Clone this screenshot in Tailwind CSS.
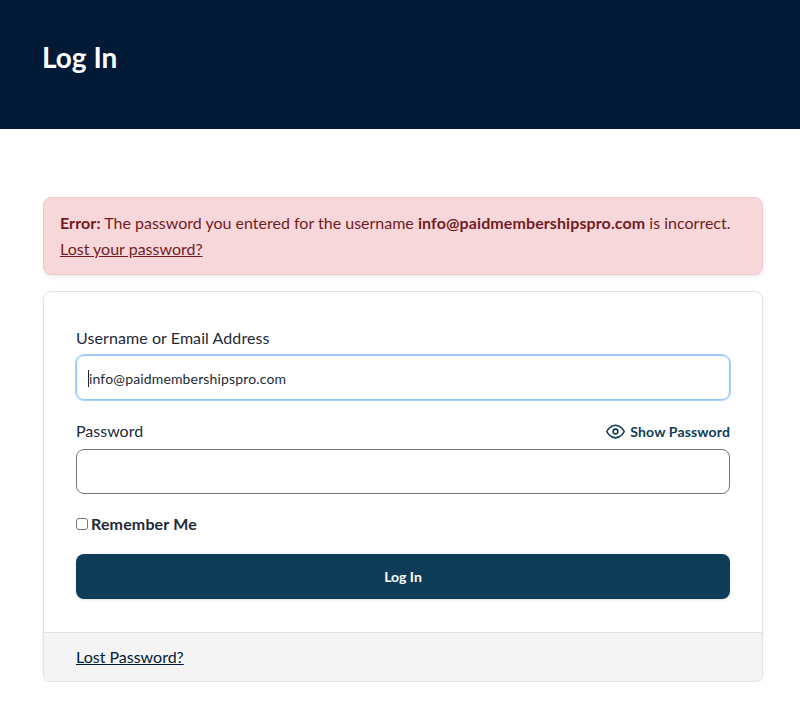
<!DOCTYPE html>
<html lang="en">
<head>
  <meta charset="UTF-8">
  <title>Log In</title>
  <script src="https://cdn.jsdelivr.net/npm/@tailwindcss/browser@4"></script>
</head>
<body class="bg-white font-['Lato',sans-serif] text-[#1e2a38] overflow-hidden">

  <header class="bg-[#001a37] h-[129px] pl-[43px] pt-[40px]">
    <h1 class="text-[28px] leading-[34px] font-bold text-white -ml-px">Log In</h1>
  </header>

  <main class="pl-[43px] pr-[37px] pt-[68px]">
    <div class="h-[78px] bg-[#f8d7da] border border-[#f5c6cb] rounded-lg shadow-md shadow-black/5 px-4 py-[12px] text-[16px] leading-[26px] text-[#721c24]">
      <p><strong class="tracking-[0.1px]">Error:</strong> The password you entered for the username <strong class="tracking-[0.1px]">info@paidmembershipspro.com</strong> is incorrect.</p>
      <a href="#" class="underline">Lost your password?</a>
    </div>

    <div class="mt-[16px] h-[391px] border border-[#e2e2e2] rounded-lg shadow-md shadow-black/5 overflow-hidden flex flex-col">
      <form class="flex-1 px-[32px] pt-[33px]">
        <label class="block text-[16px] leading-[26px] tracking-[0.08px] text-[#1e2a38]">Username or Email Address</label>
        <div class="mt-[4px] h-[45px] border border-[#8fc4fb] ring-1 ring-[#a9d2fc] rounded-lg flex items-center pl-[11px] pt-px text-[14px] tracking-[0.15px]">
          <span class="w-px h-[17px] bg-[#1e2a38]"></span>
          <span>info@paidmembershipspro.com</span>
        </div>

        <div class="mt-[18px] flex items-center justify-between">
          <label class="text-[16px] leading-[26px]">Password</label>
          <span class="flex items-center gap-[5px] text-[14px] font-bold tracking-[0.15px] text-[#0f3d57]">
            <svg class="w-[19px] h-[19px]" viewBox="0 0 24 24" fill="none" stroke="currentColor" stroke-width="2" stroke-linecap="round" stroke-linejoin="round">
              <path d="M1 12s4-8 11-8 11 8 11 8-4 8-11 8-11-8-11-8z"></path>
              <circle cx="12" cy="12" r="3"></circle>
            </svg>
            Show Password
          </span>
        </div>
        <div class="mt-[5px] h-[45px] border border-[#767676] rounded-lg"></div>

        <label class="mt-[17px] flex items-center gap-[3px] text-[16px] leading-[26px] font-bold tracking-[0.15px]">
          <span class="w-[12px] h-[12px] border border-[#767676] rounded-[3px] bg-white"></span>
          Remember Me
        </label>

        <button type="button" class="mt-[17px] w-full h-[45px] bg-[#0f3d57] text-white text-[14px] font-bold rounded-lg shadow-sm">Log In</button>
      </form>

      <div class="h-[49px] border-t border-[#dde3e5] bg-[#f4f4f4] px-[32px] pt-[11px]">
        <a href="#" class="underline text-[16px] leading-[26px] text-[#001a37]">Lost Password?</a>
      </div>
    </div>
  </main>

</body>
</html>
